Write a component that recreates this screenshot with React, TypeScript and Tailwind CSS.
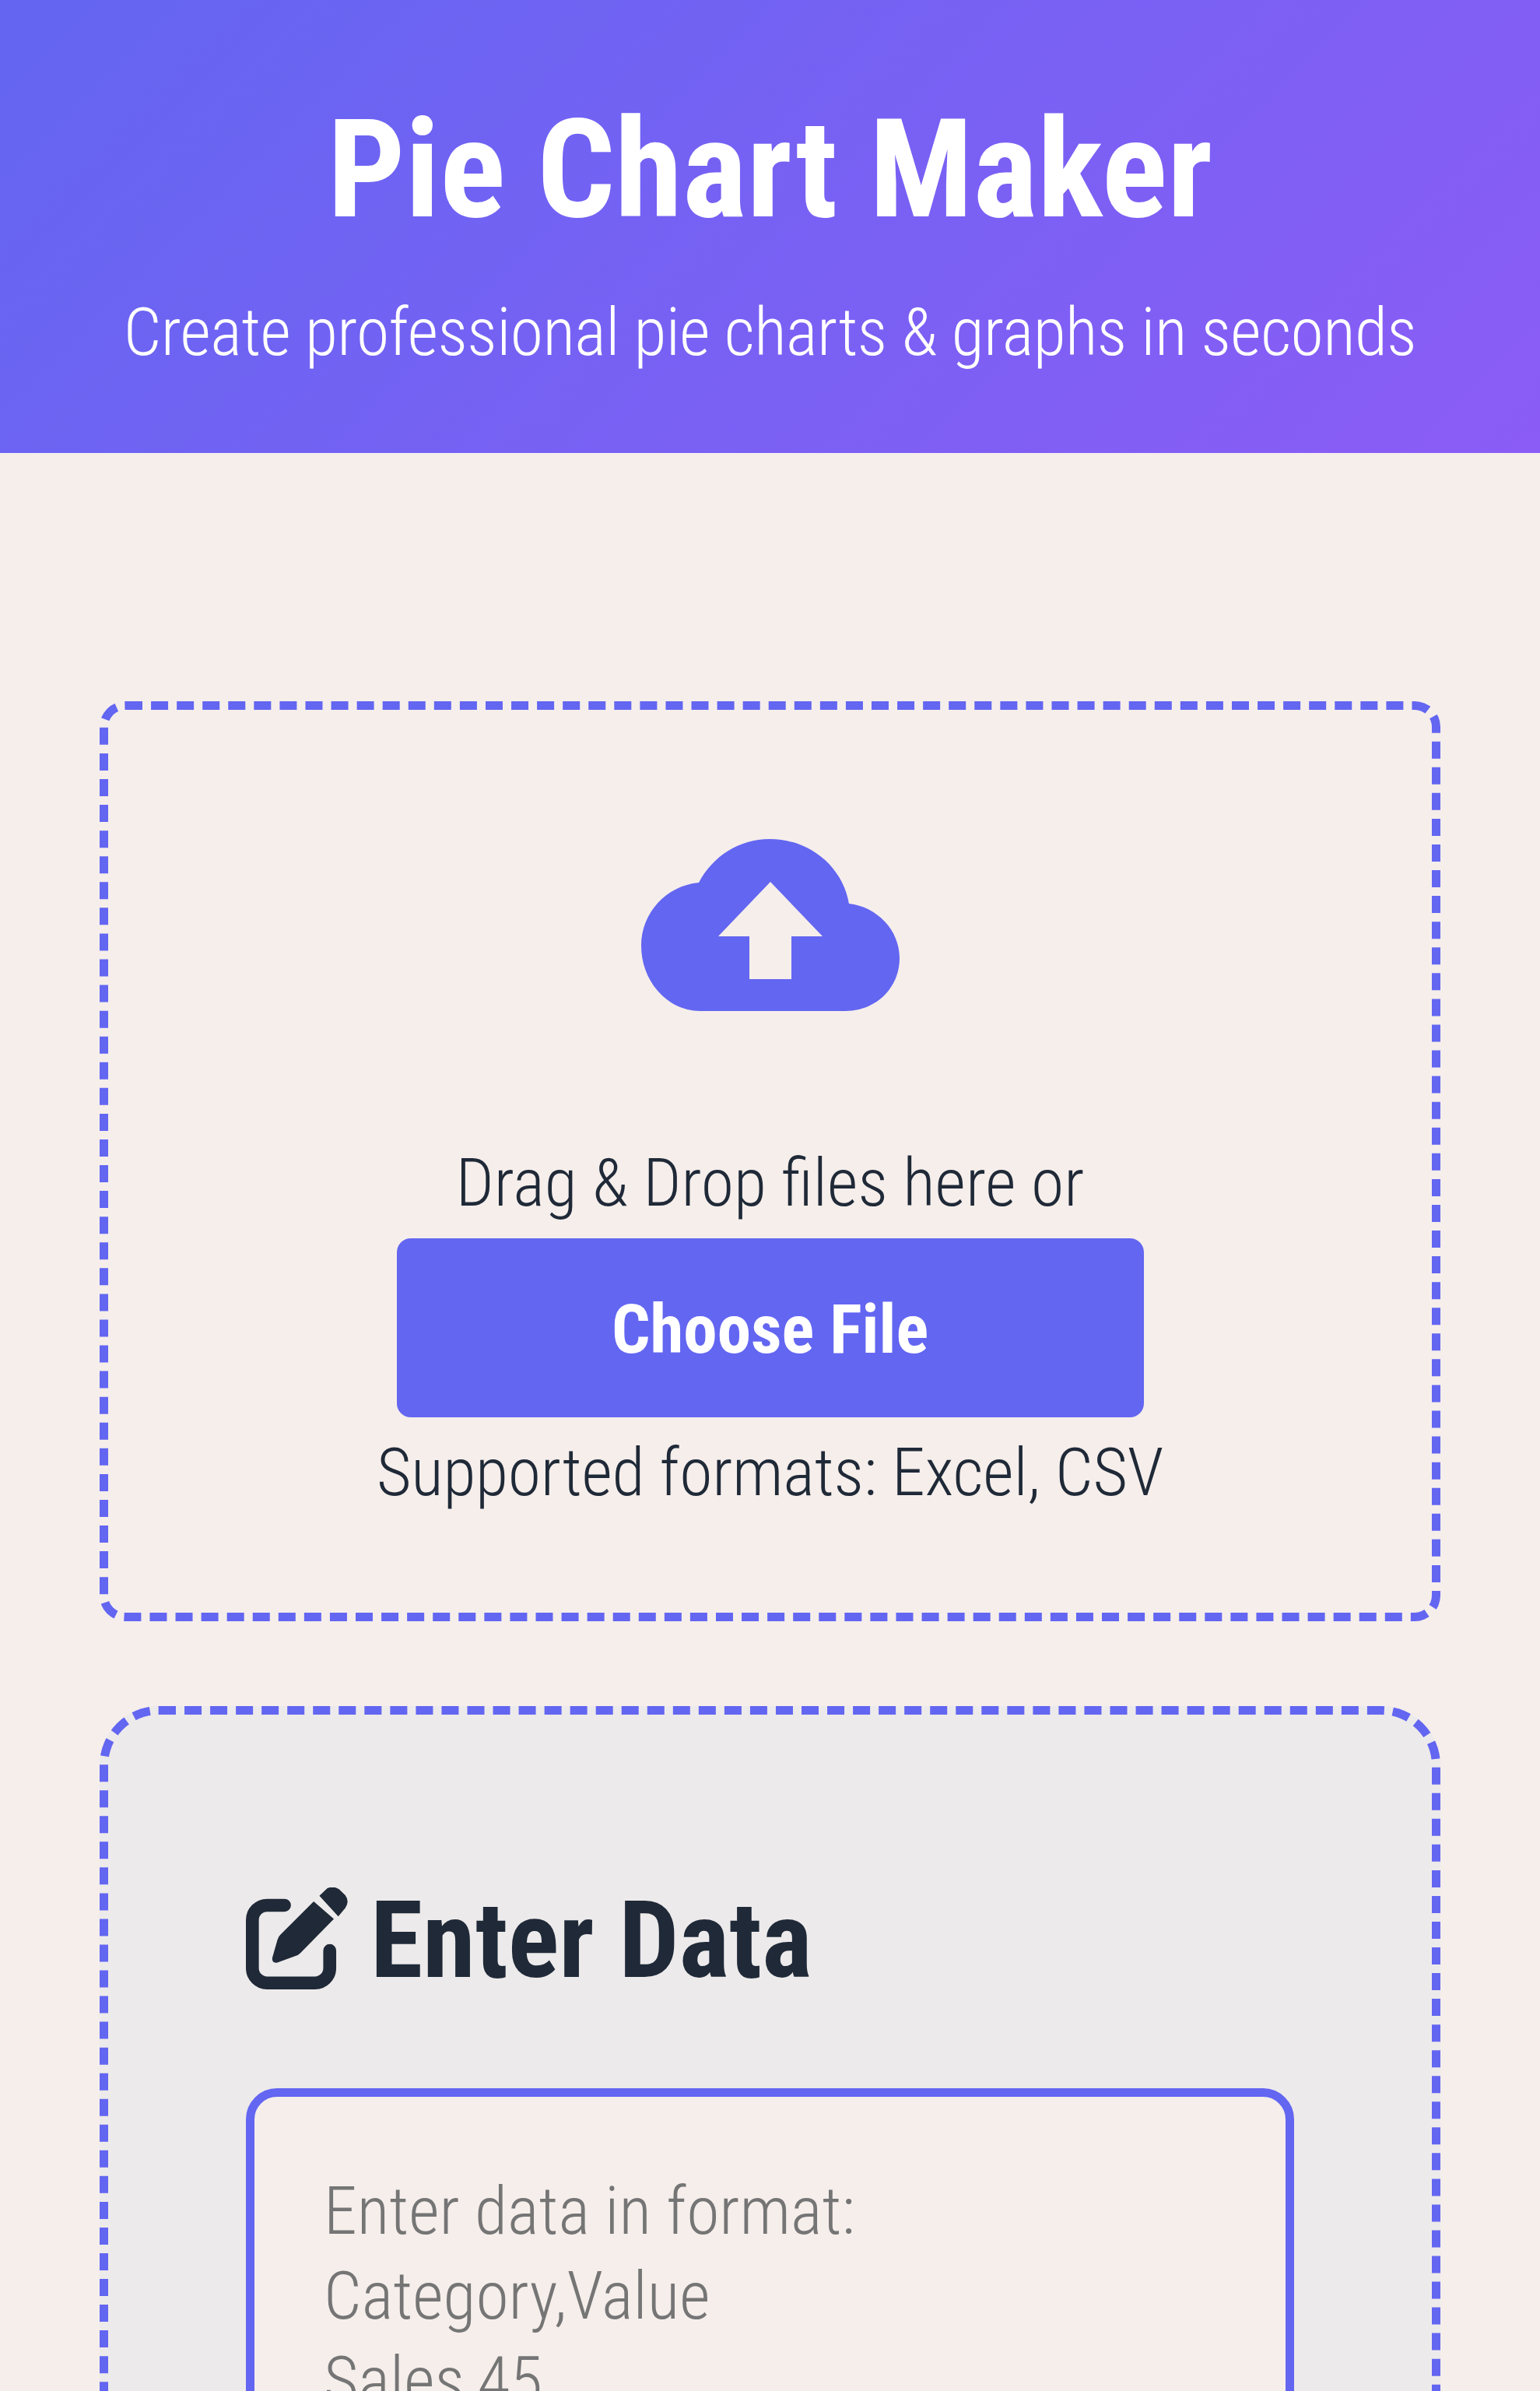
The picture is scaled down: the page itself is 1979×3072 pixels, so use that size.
function CloudIcon() {
  return (
    <svg viewBox="0 0 332 221" className="h-[221px] w-[332px] shrink-0 text-[#6366f1]" fill="currentColor">
      <path
        fillRule="evenodd"
        d="M76 221C34 221 0 183 0 137 0 95 32 60 74 56 92 22 126 0 165 0c52 0 94 36 102 83 36 4 65 34 65 70 0 38-30 68-70 68ZM166 55 99 125h40v55h54v-55h40Z"
      />
    </svg>
  );
}

function EditIcon() {
  return (
    <svg viewBox="48 38 394 394" className="mb-[6px] h-[131px] w-[131px] shrink-0" fill="currentColor">
      <path
        d="M197 107H130A57 57 0 0 0 73 164V350A57 57 0 0 0 130 407H315A57 57 0 0 0 372 350V282"
        fill="none"
        stroke="currentColor"
        strokeWidth="50"
        strokeLinecap="round"
      />
      <path d="M310 92 388 160 258 292Q250 300 240 303L170 328Q148 332 150 310L170 240Q173 228 182 220Z" />
      <path d="M332 70 362 42Q385 30 408 45L432 68Q450 92 432 118L405 150Z" />
    </svg>
  );
}

export default function App() {
  return (
    <div className="h-[3072px] overflow-hidden bg-[#f5eeeb] font-['Roboto',sans-serif] font-stretch-[75%] text-[#1f2937]">
      <header className="h-[582px] bg-[linear-gradient(135deg,#6366f1,#8b5cf6)] text-center text-white">
        <h1 className="pt-[120px] text-[176px] font-bold leading-[196px]">Pie Chart Maker</h1>
        <p className="pt-[56px] text-[86px] font-[350] leading-[110px] tracking-[-0.6px]">Create professional pie charts &amp; graphs in seconds</p>
      </header>
      <main className="px-[128px] pt-[319px]">
        <section className="flex h-[1182px] flex-col items-center rounded-[33px] border-[11px] border-dashed border-[#6366f1] pt-[166px]">
          <CloudIcon />
          <p className="mt-[166px] text-[86px] font-[350] leading-[110px]">Drag &amp; Drop files here or</p>
          <button className="mt-[16px] h-[230px] w-[960px] rounded-[18px] bg-[#6366f1] pt-[4px] text-[87px] font-bold text-white">Choose File</button>
          <p className="mt-[16px] text-[86px] font-[350] leading-[110px] tracking-[-0.2px]">Supported formats: Excel, CSV</p>
        </section>
        <section className="mt-[109px] h-[1200px] rounded-[76px] border-[11px] border-dashed border-[#6366f1] bg-[#edeaeb] px-[177px] pt-[220px]">
          <h2 className="flex items-center gap-[29px] text-[137px] font-bold leading-[140px]">
            <EditIcon />
            Enter Data
          </h2>
          <div className="mt-[120px] h-[700px] rounded-[40px] border-[11px] border-[#6366f1] bg-[#f5eeeb] pt-[92px] pr-[90px] pl-[89px] text-[86px] font-[350] leading-[109px] text-[#757575]">
            <div>Enter data in format:</div>
            <div>Category,Value</div>
            <div>Sales,45</div>
          </div>
        </section>
      </main>
    </div>
  );
}
